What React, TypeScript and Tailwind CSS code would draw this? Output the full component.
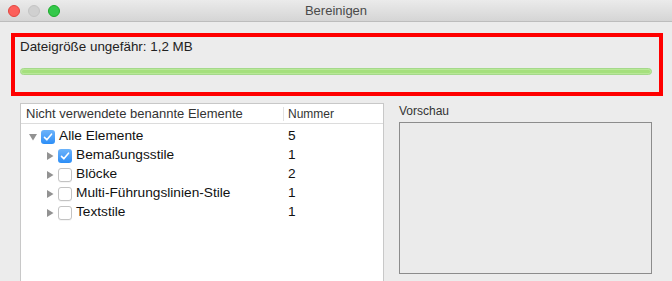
import React from 'react'

type Row = { label: string; count: number; checked: boolean; level: number; open?: boolean }

const rows: Row[] = [
  { label: 'Alle Elemente', count: 5, checked: true, level: 0, open: true },
  { label: 'Bemaßungsstile', count: 1, checked: true, level: 1 },
  { label: 'Blöcke', count: 2, checked: false, level: 1 },
  { label: 'Multi-Führungslinien-Stile', count: 1, checked: false, level: 1 },
  { label: 'Textstile', count: 1, checked: false, level: 1 },
]

const Checkbox = ({ checked }: { checked: boolean }) =>
  checked ? (
    <span className="flex h-[14px] w-[14px] items-center justify-center rounded-[3px] bg-gradient-to-b from-[#6cb3fa] to-[#2a8ef7]">
      <svg viewBox="0 0 14 14" className="h-[14px] w-[14px]">
        <path d="M3.5 7.4l2.3 2.4 4.7-5.6" fill="none" stroke="white" strokeWidth="1.6" strokeLinecap="round" strokeLinejoin="round" />
      </svg>
    </span>
  ) : (
    <span className="h-[14px] w-[14px] rounded-[3px] border border-[#c3c3c3] bg-white shadow-[0_1px_0_rgba(0,0,0,0.04)]" />
  )

const Disclosure = ({ open }: { open?: boolean }) => (
  <svg viewBox="0 0 8 8" className="h-[8px] w-[8px]">
    {open ? <path d="M0 1h8L4 7.5z" fill="#929292" /> : <path d="M1 0v8l6.5-4z" fill="#929292" />}
  </svg>
)

const App = () => {
  return (
    <div className="h-[281px] w-[672px] overflow-hidden bg-[#ececec] font-['Liberation_Sans',Arial,sans-serif] text-[#1a1a1a]">
      {/* title bar */}
      <div className="relative flex h-[22px] items-center border-b border-[#bdbdbd] bg-gradient-to-b from-[#ebebeb] to-[#d5d5d5]">
        <div className="flex items-center gap-[8px] pl-[8px]">
          <span className="h-[12px] w-[12px] rounded-full border border-[#e2463f] bg-[#fc605b]" />
          <span className="h-[12px] w-[12px] rounded-full border border-[#c4c4c4] bg-[#d0d0d0]" />
          <span className="h-[12px] w-[12px] rounded-full border border-[#1aab29] bg-[#34c84a]" />
        </div>
        <div className="absolute inset-0 flex items-center justify-center text-[13px] text-[#4a4a4a]">Bereinigen</div>
      </div>

      {/* highlighted size box */}
      <div className="ml-[11px] mt-[11px] h-[63px] w-[652px] border-4 border-[#ff0000] pl-[5px] pt-[2px]">
        <div className="text-[13.4px] leading-[16px] text-[#222]">Dateigröße ungefähr: 1,2 MB</div>
        <div className="mt-[13px] h-[7px] w-[632px] rounded-full border border-[#a4d98a] bg-[#b9e898] p-[1px]">
          <div className="h-full w-full rounded-full bg-[#a5e07d]" />
        </div>
      </div>

      <div className="ml-[20px] mt-[7px] flex gap-[15px]">
        {/* table */}
        <div className="h-[200px] w-[364px] border border-[#c8c8c8] bg-white">
          <div className="flex h-[20px] items-center border-b border-[#dcdcdc] text-[13px] text-[#333]">
            <div className="flex h-full w-[262px] items-center pl-[5px]">Nicht verwendete benannte Elemente</div>
            <div className="h-[14px] w-px bg-[#e2e2e2]" />
            <div className="pl-[4px] text-[12px]">Nummer</div>
          </div>
          <div className="pt-[3px]">
            {rows.map((r) => (
              <div key={r.label} className="flex h-[19px] items-center text-[13.7px] text-[#111]">
                <div className={`flex w-[263px] items-center gap-[4px] ${r.level === 0 ? 'pl-[8px]' : 'pl-[25px]'}`}>
                  <Disclosure open={r.open} />
                  <Checkbox checked={r.checked} />
                  <span>{r.label}</span>
                </div>
                <div className="pl-[4px]">{r.count}</div>
              </div>
            ))}
          </div>
        </div>

        {/* preview */}
        <div className="flex flex-col">
          <div className="h-[19px] text-[12px] leading-[16px] text-[#333]">Vorschau</div>
          <div className="h-[152px] w-[253px] border border-[#8c8c8c] bg-[#ebebeb]" />
        </div>
      </div>
    </div>
  )
}

export default App
